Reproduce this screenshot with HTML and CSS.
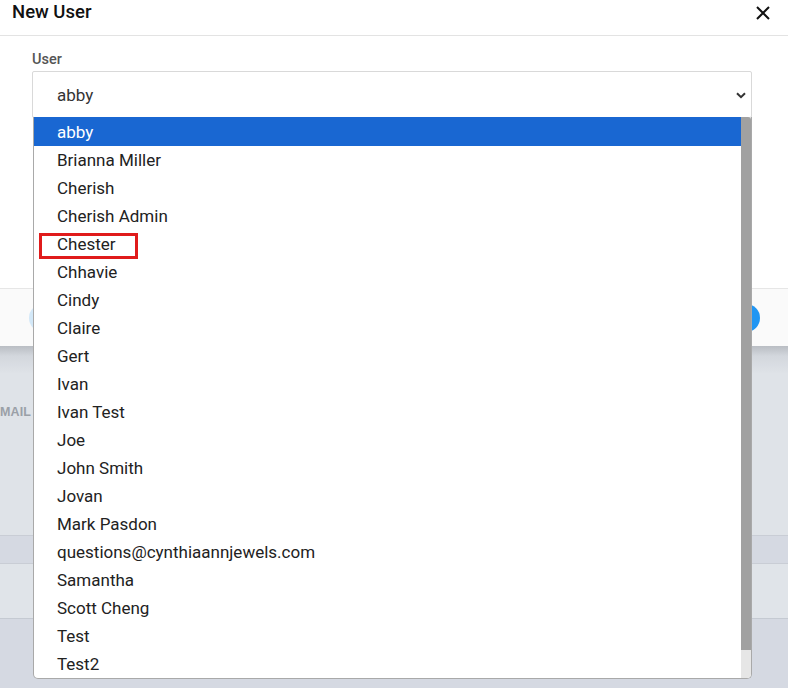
FILE: index.html
```html
<!DOCTYPE html>
<html lang="en">
<head>
<meta charset="utf-8">
<title>New User</title>
<link rel="stylesheet" href="styles.css">
</head>
<body>
<div class="page">
  <section class="modal">
    <header class="modal-header">
      <h1 class="modal-title">New User</h1>
      <button class="close-btn" aria-label="Close">
        <svg width="14" height="14" viewBox="0 0 14 14"><path d="M1 1L13 13M13 1L1 13" stroke="#111" stroke-width="2" fill="none"/></svg>
      </button>
    </header>
    <div class="modal-body">
      <label class="field-label">User</label>
      <div class="select">
        <span class="select-value">abby</span>
        <svg class="chevron" width="10" height="7" viewBox="0 0 10 7"><path d="M1 1.2L5 5.2L9 1.2" stroke="#333" stroke-width="2" fill="none"/></svg>
      </div>
    </div>
    <footer class="modal-footer">
      <span class="btn btn-light"></span>
      <span class="btn btn-primary"></span>
    </footer>
  </section>
  <div class="behind">
    <div class="behind-head"><span class="col-title">MAIL</span></div>
    <div class="behind-band"></div>
    <div class="behind-row"></div>
    <div class="behind-rest"></div>
  </div>

  <div class="dropdown">
    <ul class="options">
      <li class="option selected">abby</li>
      <li class="option">Brianna Miller</li>
      <li class="option">Cherish</li>
      <li class="option">Cherish Admin</li>
      <li class="option">Chester</li>
      <li class="option">Chhavie</li>
      <li class="option">Cindy</li>
      <li class="option">Claire</li>
      <li class="option">Gert</li>
      <li class="option">Ivan</li>
      <li class="option">Ivan Test</li>
      <li class="option">Joe</li>
      <li class="option">John Smith</li>
      <li class="option">Jovan</li>
      <li class="option">Mark Pasdon</li>
      <li class="option">questions@cynthiaannjewels.com</li>
      <li class="option">Samantha</li>
      <li class="option">Scott Cheng</li>
      <li class="option">Test</li>
      <li class="option">Test2</li>
    </ul>
    <div class="scrollbar"><div class="thumb"></div></div>
  </div>
  <div class="highlight-box"></div>
</div>
</body>
</html>
```

FILE: styles.css
```css
* { box-sizing: border-box; }
html, body { margin: 0; padding: 0; }
body {
  width: 788px;
  height: 688px;
  overflow: hidden;
  background: #d5d9e2;
  font-family: Roboto, "Liberation Sans", Arial, sans-serif;
  color: #222;
}
.page {
  position: relative;
  width: 788px;
  height: 688px;
}
.modal {
  background: #fff;
  height: 346px;
  display: flex;
  flex-direction: column;
  position: relative;
  z-index: 1;
}
.modal-header {
  height: 36px;
  border-bottom: 1px solid #e3e3e3;
  display: flex;
  align-items: center;
  justify-content: space-between;
  padding: 0 18px 0 12px;
}
.modal-title {
  margin: 0 0 12px 0;
  font-size: 18.5px;
  font-weight: 500;
  color: #111;
}
.close-btn {
  border: 0;
  background: none;
  padding: 0;
  margin-bottom: 10px;
  display: flex;
}
.modal-body {
  flex: 1;
  padding: 15px 36px 0 32px;
}
.field-label {
  display: block;
  font-size: 14.5px;
  font-weight: 500;
  color: #555;
  margin-bottom: 3px;
  line-height: 17px;
}
.select {
  height: 47px;
  border: 1px solid #d9d9d9;
  border-radius: 2px;
  display: flex;
  align-items: center;
  justify-content: space-between;
  padding: 0 5px 0 24px;
}
.select-value {
  font-size: 17px;
  color: #333;
}
.chevron { margin-top: 2px; }
.modal-footer {
  height: 58px;
  border-top: 1px solid #e6e6e6;
  background: #fafafa;
  display: flex;
  align-items: center;
  justify-content: space-between;
  padding: 0 28px 0 29px;
}
.btn {
  display: block;
  height: 28px;
  border-radius: 14px;
}
.btn-light { width: 60px; background: #d3e8f8; }
.btn-primary { width: 60px; background: #2196f3; }

.behind {
  display: flex;
  flex-direction: column;
  height: 342px;
}
.behind-head {
  height: 190px;
  background: linear-gradient(#b9bdc3 0px, #d3d7dd 10px, #dfe3e8 28px, #dfe3e8 100%);
  border-bottom: 1px solid #c9cdd5;
  padding-top: 59px;
}
.col-title {
  display: block;
  font-size: 12.5px;
  font-weight: 700;
  color: #9aa0a7;
  letter-spacing: 0.1px;
  font-family: "Liberation Sans", Arial, sans-serif;
}
.behind-band {
  height: 28px;
  background: #d5d9e2;
  border-bottom: 1px solid #c9cdd5;
}
.behind-row {
  height: 55px;
  background: #e0e4e9;
  border-bottom: 1px solid #c5cad2;
}
.behind-rest {
  flex: 1;
  background: #d5d9e2;
}

.dropdown {
  position: absolute;
  left: 33px;
  top: 117px;
  width: 719px;
  height: 562px;
  background: #fff;
  border: 1px solid #a9a9a9;
  border-top: 0;
  border-radius: 0 0 5px 5px;
  display: flex;
  overflow: hidden;
  z-index: 2;
}
.options {
  list-style: none;
  margin: 0;
  padding: 1px 0 0 0;
  flex: 1;
}
.option {
  height: 28px;
  line-height: 28px;
  padding-left: 23px;
  font-size: 17px;
  color: #222;
}
.option.selected {
  background: #1967d2;
  color: #fff;
  margin-top: -1px;
  height: 29px;
  line-height: 30px;
}
.scrollbar {
  width: 10px;
  background: #e6e6e6;
  display: flex;
  flex-direction: column;
}
.thumb {
  height: 533px;
  background: #a1a1a1;
  border-radius: 0 3px 0 0;
}
.highlight-box {
  position: absolute;
  left: 39px;
  top: 233px;
  width: 99px;
  height: 26px;
  border: 3px solid #e01b1b;
  z-index: 3;
}
```
